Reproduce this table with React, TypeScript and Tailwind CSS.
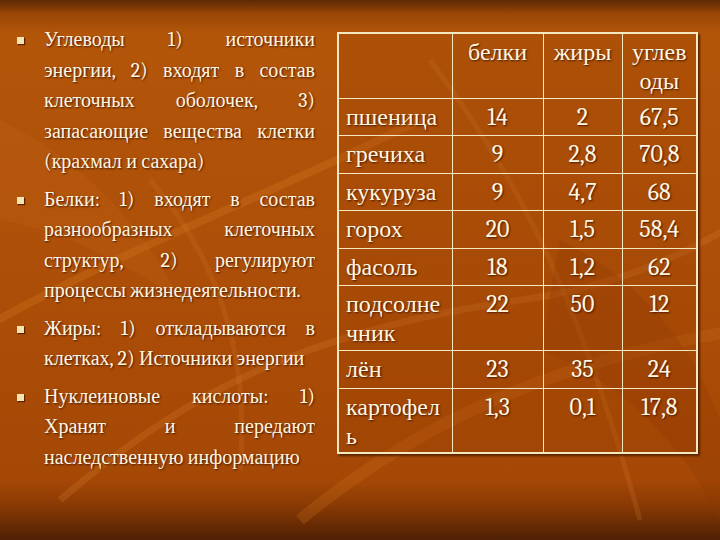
import React from 'react';

// each bullet is kept as its visual lines so the justified wrapping matches
const bullets: string[][] = [
  ['Углеводы 1) источники', 'энергии, 2) входят в состав', 'клеточных оболочек, 3)', 'запасающие вещества клетки', '(крахмал и сахара)'],
  ['Белки: 1) входят в состав', 'разнообразных клеточных', 'структур, 2) регулируют', 'процессы жизнедеятельности.'],
  ['Жиры: 1) откладываются в', 'клетках, 2) Источники энергии'],
  ['Нуклеиновые кислоты: 1)', 'Хранят и передают', 'наследственную информацию'],
];

const rows: [string, string, string, string][] = [
  ['пшеница', '14', '2', '67,5'],
  ['гречиха', '9', '2,8', '70,8'],
  ['кукуруза', '9', '4,7', '68'],
  ['горох', '20', '1,5', '58,4'],
  ['фасоль', '18', '1,2', '62'],
  ['подсолне чник', '22', '50', '12'],
  ['лён', '23', '35', '24'],
  ['картофел ь', '1,3', '0,1', '17,8'],
];

const Swirls = () => (
  <svg className="absolute inset-0" width="720" height="540" viewBox="0 0 720 540" fill="none">
    <path d="M-20 330 C 120 250, 260 200, 420 120" stroke="#d77a22" strokeOpacity="0.3" strokeWidth="8" />
    <path d="M60 500 C 200 380, 320 330, 520 300 C 600 290, 680 260, 740 220" stroke="#d98030" strokeOpacity="0.25" strokeWidth="7" />
    <path d="M300 520 C 420 420, 560 360, 740 330" stroke="#c86a1a" strokeOpacity="0.3" strokeWidth="12" />
    <path d="M430 60 C 520 180, 580 300, 640 520" stroke="#d98030" strokeOpacity="0.2" strokeWidth="5" />
    <path d="M150 180 C 220 260, 250 360, 240 470" stroke="#d98030" strokeOpacity="0.18" strokeWidth="5" />
    <path d="M560 240 C 640 280, 690 340, 720 420 L 720 520 C 680 440, 620 380, 540 350 Z" fill="#8a3600" fillOpacity="0.25" />
    <path d="M0 120 C 80 160, 140 220, 180 300 C 120 260, 60 230, 0 220 Z" fill="#d27020" fillOpacity="0.15" />
  </svg>
);

const cell = 'border border-[#f5e8c0] pt-[4px]';

export default function App() {
  return (
    <div
      className="relative w-[720px] h-[540px] overflow-hidden text-[#fff6e0] [text-shadow:1px_1px_2px_#4a1800] font-serif"
      style={{
        background:
          'linear-gradient(to bottom, #5e2a04 0px, #9a4606 14px, #b3560a 34px, #ad4f08 260px, #a54806 480px, #8a3a04 505px, #4e2003 540px)',
      }}
    >
      <Swirls />
      <div className="relative flex h-full">
        <ul className="w-[337px] shrink-0 pt-[25px] pl-[17px] pr-[22px]">
          {bullets.map((lines, i) => (
            <li key={i} className="flex mb-[7px]">
              <span className="mt-[12px] w-[7px] h-[7px] shrink-0 bg-[#f3e4b0] [box-shadow:1px_1px_1px_#5a2000]" />
              <div className="ml-[20px] flex-1 text-[20px] leading-[30.5px]">
                {lines.map((l, j) => (
                  <div
                    key={j}
                    className={j === lines.length - 1 ? 'text-left' : 'text-justify [text-align-last:justify]'}
                  >
                    {l}
                  </div>
                ))}
              </div>
            </li>
          ))}
        </ul>
        <div className="pt-[32px]">
          <table className="w-[359px] table-fixed border-collapse border-2 border-[#f5e8c0] bg-[#8c3800]/15 text-[24px] leading-[29px] [box-shadow:2px_2px_2px_#5a2400]">
            <colgroup>
              <col className="w-[114px]" />
              <col className="w-[91px]" />
              <col className="w-[79px]" />
              <col className="w-[75px]" />
            </colgroup>
            <thead>
              <tr className="h-[65px] align-top">
                <th className="border border-[#f5e8c0]" />
                <th className={`${cell} font-normal text-center`}>белки</th>
                <th className={`${cell} font-normal text-center`}>жиры</th>
                <th className={`${cell} font-normal text-center`}>
                  углев<br />оды
                </th>
              </tr>
            </thead>
            <tbody>
              {rows.map(([name, a, b, c]) => {
                const parts = name.split(' ');
                const tall = parts.length > 1;
                return (
                  <tr key={name} className={`${tall ? 'h-[65px]' : 'h-[37.5px]'} align-top`}>
                    <td className={`${cell} pl-[7px]`}>
                      {tall ? (
                        <>
                          {parts[0]}
                          <br />
                          {parts[1]}
                        </>
                      ) : (
                        name
                      )}
                    </td>
                    <td className={`${cell} text-center`}>{a}</td>
                    <td className={`${cell} text-center`}>{b}</td>
                    <td className={`${cell} text-center`}>{c}</td>
                  </tr>
                );
              })}
            </tbody>
          </table>
        </div>
      </div>
    </div>
  );
}
